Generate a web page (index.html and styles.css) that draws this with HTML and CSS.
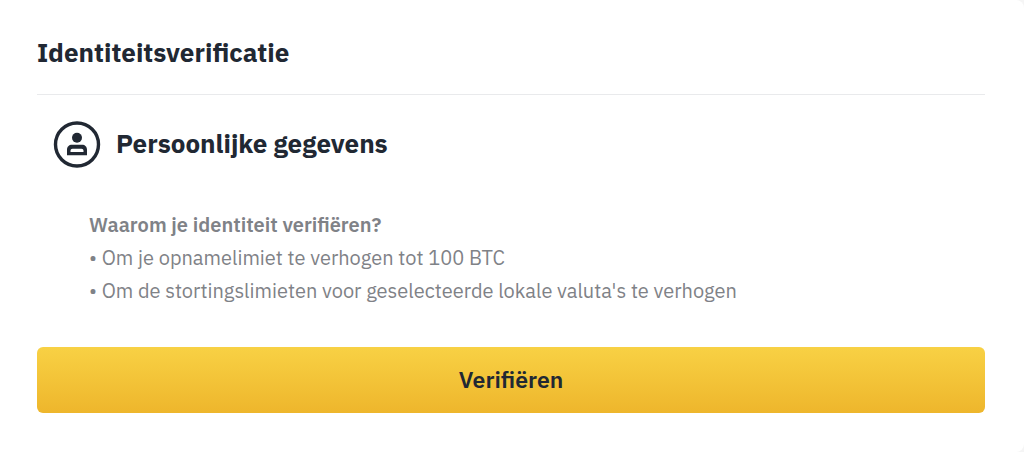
FILE: index.html
```html
<!DOCTYPE html>
<html lang="nl">
<head>
  <meta charset="UTF-8" />
  <meta name="viewport" content="width=device-width, initial-scale=1.0"/>
  <title>Identiteitsverificatie</title>
  <link rel="stylesheet" href="styles.css">
</head>
<body>

  <main class="card">
    <h1 class="card-title">Identiteitsverificatie</h1>

    <section class="personal">
      <div class="section-head">
        <svg class="section-icon" viewBox="0 0 48 48" fill="#212833" aria-hidden="true">
          <circle cx="24" cy="23.500" r="21.500" fill="none" stroke="#212833" stroke-width="3.400"/>
          <circle cx="24" cy="16.800" r="5"/>
          <path fill-rule="evenodd" d="M14 34.300v-5.500c0-3 2-5 5-5h10c3 0 5 2 5 5v5.500zM17.500 31h13v-1.300c0-1.300-.8-2-2-2h-9c-1.200 0-2 .7-2 2z"/>
        </svg>
        <h2>Persoonlijke gegevens</h2>
      </div>

      <div class="reasons">
        <h3>Waarom je identiteit verifiëren?</h3>
        <ul>
          <li>Om je opnamelimiet te verhogen tot 100 BTC</li>
          <li>Om de stortingslimieten voor geselecteerde lokale valuta's te verhogen</li>
        </ul>
      </div>
    </section>

    <button type="button" class="verify">Verifiëren</button>
  </main>

</body>
</html>
```

FILE: styles.css
```css
body {
  margin: 0;
  font-family: 'IBM Plex Sans', Roboto, sans-serif;
  background: #f5f5f5;
  color: #212833;
}
h1, h2, h3, ul {
  margin: 0;
  padding: 0;
}
.card {
  padding: 33px 39px 39px 37px;
  border-radius: 0 8px 8px 0;
  background: #fff;
}
.card-title {
  padding-bottom: 23px;
  border-bottom: 1px solid #e9eaec;
  font-size: 26px;
  line-height: 38px;
  font-weight: 700;
}
.section-head {
  display: flex;
  align-items: center;
  gap: 15px;
  padding: 26px 0 0 16px;
}
.section-icon {
  width: 48px;
  height: 48px;
}
.section-head h2 {
  padding-bottom: 4px;
  font-size: 26px;
  font-weight: 700;
}
.reasons {
  padding: 39px 0 0 52px;
  color: #7f8287;
  font-size: 20px;
  line-height: 33px;
}
.reasons h3 {
  font-size: 20px;
  font-weight: 600;
}
.reasons ul {
  list-style: none;
}
.reasons li::before {
  content: "• ";
}
.verify {
  display: block;
  width: 100%;
  height: 66px;
  margin-top: 40px;
  padding-bottom: 3px;
  border: none;
  border-radius: 6px;
  background: linear-gradient(#f8d144, #eeb62c);
  color: #212833;
  font-family: inherit;
  font-size: 23px;
  font-weight: 600;
  cursor: pointer;
}
```
